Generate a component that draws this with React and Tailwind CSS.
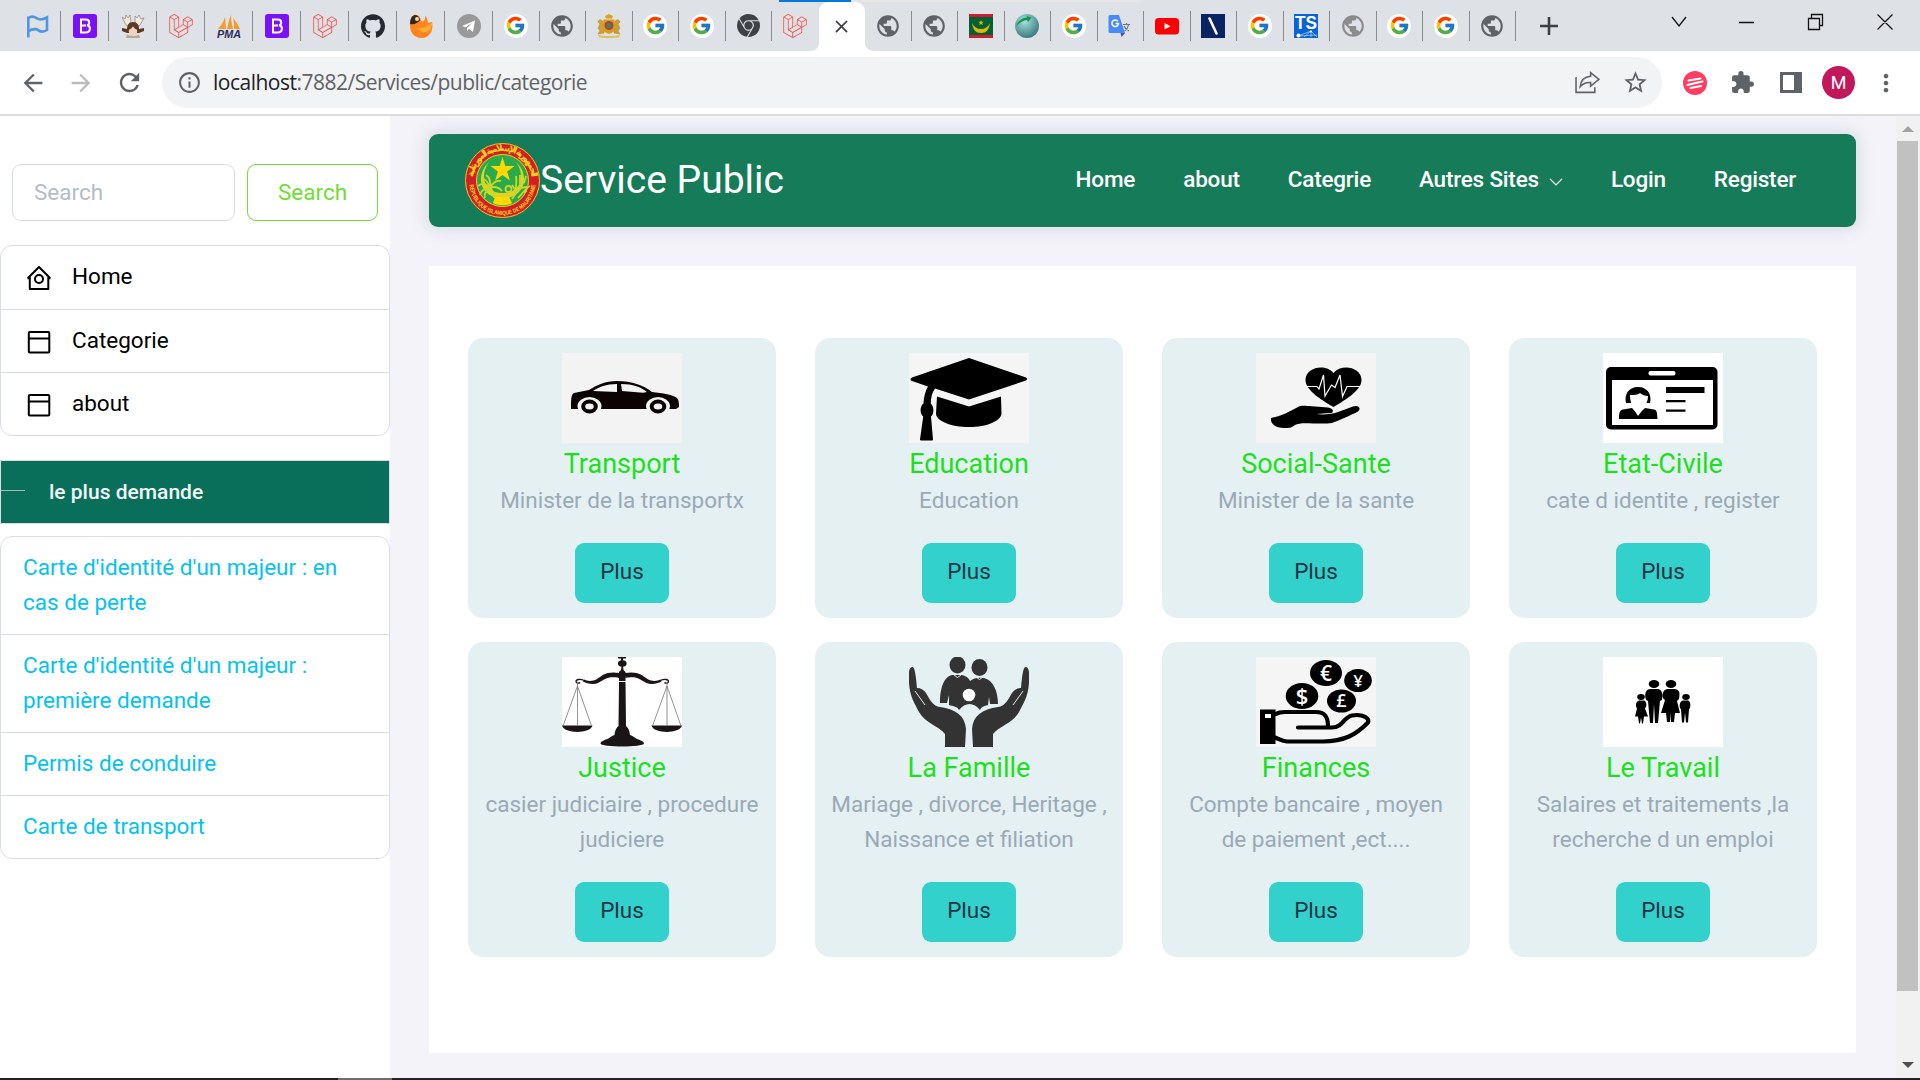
import React from "react";
import { SiLaravel, SiGithub, SiGooglechrome } from "react-icons/si";
import { FcGoogle } from "react-icons/fc";
import { MdPublic, MdExtension, MdArrowBack, MdArrowForward, MdRefresh, MdInfoOutline, MdStarBorder, MdMoreVert, MdAdd, MdClose } from "react-icons/md";

const Bootstrap = () => (
  <svg viewBox="0 0 24 24" className="size-6">
    <rect width="24" height="24" rx="3" fill="#7a12f8" />
    <path d="M8 5.500h4.600c2.200 0 3.600 1.100 3.600 3 0 1.400-.9 2.500-2.200 2.700 1.700.2 2.900 1.400 2.900 3.200 0 2.500-1.700 4-4.500 4H8z" fill="none" stroke="#fff" strokeWidth="2" />
    <path d="M8 11.500h5" stroke="#fff" strokeWidth="2" />
  </svg>
);
const Google = () => (
  <span className="flex size-6 items-center justify-center rounded-full bg-white">
    <FcGoogle size={21} />
  </span>
);
const Laravel = () => <SiLaravel size={24} color="#f9453b" />;
const Globe = () => <MdPublic size={26} color="#5f6368" />;
const PaleGlobe = () => <MdPublic size={26} color="#8b8b8b" />;
const Flag = () => (
  <svg viewBox="0 0 24 24" className="ml-[3px] size-6" fill="none" stroke="#5294e2" strokeWidth="2.600">
    <path d="M2.300 23.500V2.500M2.300 4c3-2 6-1.500 8.500.3s6 1.500 10.200-.8v12.500c-3 2-6 2-8.500.3s-6.500-1.300-10.200.7" />
  </svg>
);
const Figure = () => (
  <svg viewBox="0 0 24 24" className="size-6">
    <path d="M5 11 1 3l3 2 1-4 2 3 2-3 1 6-3 5zM19 11l4-7-3 1-2-4-2 3-2-2 0 6 4 4z" fill="#f3e9dc" stroke="#8e8175" strokeWidth=".7" />
    <path d="M6 15c0-4 2-7 6-7s6 3 6 7l5-1v3l-5 2H6l-5-2v-3z" fill="#5b3827" />
    <ellipse cx="12" cy="17" rx="4.200" ry="4.500" fill="#f2d2bd" />
    <path d="M7 16c3-1 4-2 5-4 1 2 2 3 5 4l-1-6H8z" fill="#5b3827" />
    <path d="M6 20.500c4 2 8 2 12 0l1 3.500H5z" fill="#b9a88c" />
  </svg>
);
const Pma = () => (
  <svg viewBox="0 0 26 24" className="h-6 w-[26px]">
    <path d="M2 15C5 12 8 7 9 3l1 12zM11 15c1-5 2-9 4-14 0 5 1 10 2 14zM18 15c0-4 0-8-1-11 3 3 5 7 7 11z" fill="#f59b2c" />
    <text x="13" y="23.500" textAnchor="middle" fontFamily="Liberation Sans" fontWeight="700" fontStyle="italic" fontSize="10.500" textLength="24" lengthAdjust="spacingAndGlyphs" fill="#2b2c63">PMA</text>
  </svg>
);
const Firebird = () => (
  <svg viewBox="0 0 24 24" className="size-6">
    <path d="M5 1c4-1 6 2 7 5 1 3 5 1 4-4 3 2 2 4 3 7l4-1c2 9-3 16-11 16C6 24 1 19 1 12 1 7 2 3 5 1z" fill="#ff8420" />
    <path d="M8 14c5 1 9-1 15-5 0 6-4 10-10 9z" fill="#ffb02e" />
    <path d="M1 10C1 5 2.500 2 5.500 1c3 0 5 2 5.500 5-2 3-6 5-10 4z" fill="#33271c" />
    <circle cx="8" cy="5" r="2" fill="#f6d9a4" />
  </svg>
);
const Telegram = () => (
  <svg viewBox="0 0 24 24" className="size-6">
    <circle cx="12" cy="12" r="12" fill="#999" />
    <path d="M5 12 18 6.500 16 18l-4-3-2 2v-3l5-5-6.500 4.300z" fill="#fff" />
  </svg>
);
const Crest = () => (
  <svg viewBox="0 0 24 24" className="size-6">
    <path d="M9 4.500 8 2l4-2 4 2-1 2.500z" fill="#d6a51f" />
    <path d="M7 9C5 5 2 5 1 8l2 2-2 4 2 3-2 3 6-1zM17 9c2-4 5-4 6-1l-2 2 2 4-2 3 2 3-6-1z" fill="#cba12f" stroke="#a98328" strokeWidth=".5" />
    <path d="M6.500 5.500h11V15c0 3-3 4-5.500 5-2.500-1-5.500-2-5.500-5z" fill="#d99b25" />
    <circle cx="12" cy="11.500" r="4.500" fill="#c33b2b" />
    <circle cx="12" cy="11.500" r="2.600" fill="#2f8a68" />
    <path d="M1 20.500c5 2 17 2 22 0l-1 3c-6 .7-14 .7-20 0z" fill="#dcc159" />
  </svg>
);
const Chrome = () => <SiGooglechrome size={23} color="#3f4347" />;
const Mauritania = () => (
  <svg viewBox="0 0 24 24" className="size-6">
    <path fill="#006233" d="M0 0h24v24H0z" />
    <path fill="#d01c2f" d="M0 0h24v3H0zM0 21h24v3H0z" />
    <path d="M3 9c1 7 4 10 9 10s8-3 9-10c-2 4-5 6-9 6S5 13 3 9z" fill="#e3b505" />
    <path d="m12 6 .7 1.800h2l-1.500 1.200.6 2L12 10l-1.800 1 .6-2-1.500-1.200h2z" fill="#e3b505" />
  </svg>
);
const Orb = () => (
  <svg viewBox="0 0 24 24" className="size-6">
    <defs>
      <radialGradient id="orb" cx=".4" cy=".3" r=".8">
        <stop offset="0" stopColor="#a6e0de" />
        <stop offset="1" stopColor="#2f6d72" />
      </radialGradient>
    </defs>
    <circle cx="12" cy="12" r="12" fill="url(#orb)" />
    <path d="M1 12.500C3 7 7 4 12 3.500L11.500 2l5 1.500L13 8l-.8-2C8 6 4.500 9 1 12.500z" fill="#12924f" />
  </svg>
);
const Translate = () => (
  <svg viewBox="0 0 24 24" className="size-6">
    <path d="M9 5h13a1.500 1.500 0 0 1 1.500 1.500V20a1.500 1.500 0 0 1-1.500 1.500H14z" fill="#dfe1e5" />
    <path d="M12.500 19H17l-3.500 4z" fill="#3a50ad" />
    <path d="M2 1h9l6 18H2a1.500 1.500 0 0 1-1.500-1.500v-15A1.500 1.500 0 0 1 2 1z" fill="#4a8af4" />
    <path d="M9.800 7.200A3.300 3.300 0 1 0 10.500 9.500H7.500" fill="none" stroke="#fff" strokeWidth="1.500" />
    <path d="M15 10.500h7M18.500 9v1.500M20.500 11c-.5 3-2.500 5-4 6M16 12c1 2.500 3 4 5 5" fill="none" stroke="#607985" strokeWidth="1.100" />
  </svg>
);
const YouTube = () => (
  <svg viewBox="0 0 24 24" className="size-6">
    <rect y="4" width="24" height="16.500" rx="3.500" fill="#f00" />
    <path d="m9.500 9 6 3.200-6 3.300z" fill="#fff" />
  </svg>
);
const Slash = () => (
  <svg viewBox="0 0 24 24" className="size-6">
    <path fill="#0a2463" d="M0 0h24v24H0z" />
    <path d="m8.500 4.500 7 15" stroke="#fff" strokeWidth="2.600" strokeLinecap="round" />
  </svg>
);
const Ts = () => (
  <svg viewBox="0 0 24 24" className="size-6">
    <path fill="#0a62d8" d="M0 0h24v24H0z" />
    <text x="12" y="14.500" textAnchor="middle" fontFamily="Liberation Sans" fontWeight="700" fontSize="18" textLength="22" lengthAdjust="spacingAndGlyphs" fill="#fff">TS</text>
    <path d="m4 22 13-5 6 6M4 22l19-1M10 23l7-6v6" stroke="#d8e8ff" strokeWidth=".6" fill="none" />
    <circle cx="4.500" cy="21.500" r="2" fill="#fff" /><circle cx="17" cy="17.500" r="1.100" fill="#fff" />
  </svg>
);
const Github = () => <SiGithub size={24} color="#24292f" />;

const wideTabs = [Flag, Bootstrap, Figure, Laravel, Pma, Bootstrap, Laravel, Github, Firebird, Telegram];
const midTabs = [Google, Globe, Crest, Google, Google, Chrome, Laravel];
const endTabs = [Globe, Globe, Mauritania, Orb, Google, Translate, YouTube, Slash, Google, Ts, PaleGlobe, Google, Google, Globe];

function Tab({ icon: Icon, wide, last }) {
  return (
    <div className={`flex h-[30px] shrink-0 items-center justify-center ${wide ? "w-12" : "w-[46.500px]"} ${last ? "" : "border-r-[1.500px] border-[#8a8d91]"}`}>
      <Icon />
    </div>
  );
}

function TabStrip() {
  return (
    <div className="relative flex h-[51px] items-center bg-[#dee1e6] pl-[13px]">
      <div className="absolute top-0 left-[779px] flex h-[2px] w-[362px] bg-[#e6e6e6]">
        <div className="w-[72px] bg-[#0078d7]" />
      </div>
      {wideTabs.map((t, i) => <Tab key={i} icon={t} wide />)}
      {midTabs.map((t, i) => <Tab key={i} icon={t} last={i === 6} />)}
      <div className="relative flex h-[49px] w-[46.500px] shrink-0 items-center justify-center self-end rounded-t-[9px] bg-white">
        <MdClose size={21} color="#3c4043" />
        <svg viewBox="0 0 9 9" className="absolute bottom-0 -left-[9px] size-[9px]"><path d="M9 0v9H0c6 0 9-4 9-9z" fill="#fff" /></svg>
        <svg viewBox="0 0 9 9" className="absolute -right-[9px] bottom-0 size-[9px]"><path d="M0 0v9h9C3 9 0 5 0 0z" fill="#fff" /></svg>
      </div>
      {endTabs.map((t, i) => <Tab key={i} icon={t} />)}
      <svg viewBox="0 0 18 18" className="ml-[24px] size-[18px] shrink-0" stroke="#3c4043" strokeWidth="2.600"><path d="M9 0v18M0 9h18" /></svg>
      <svg viewBox="0 0 242 24" className="mr-[24px] mb-2 ml-auto h-6 w-[242px] shrink-0" fill="none" stroke="#111" strokeWidth="1.300">
        <path d="m18 7 7 9 7-9M85 12.500h15" />
        <path d="M154.500 8.500h11v11h-11zM157.500 8.500v-4h11v11h-3M223.500 4.500l15 15M238.500 4.500l-15 15" />
      </svg>
    </div>
  );
}

function Toolbar() {
  return (
    <div className="flex h-[65px] items-center border-b-2 border-[#dcdce0] bg-white pl-[19px]">
      <MdArrowBack size={28} color="#5f6368" className="shrink-0" />
      <MdArrowForward size={28} color="#babcbe" className="ml-[20px] shrink-0" />
      <MdRefresh size={29} color="#5f6368" className="ml-[20px] shrink-0" />
      <div className="ml-[18px] flex h-[51px] w-[1500px] shrink-0 items-center rounded-full bg-[#f1f3f4] pl-[15px]">
        <MdInfoOutline size={25} color="#5f6368" />
        <span className="ml-[11px] font-['Open_Sans','Noto_Sans',sans-serif] text-[21px] tracking-[-0.5px] whitespace-nowrap text-[#5f6368]">
          <span className="text-[#202124]">localhost</span>:7882/Services/public/categorie
        </span>
        <svg viewBox="0 0 24 24" className="mr-[22px] ml-auto size-[25px]" fill="none" stroke="#5f6368" strokeWidth="1.500">
          <path d="M1 7v14.500h18v-5" />
          <path d="M15 2.500 23 9l-8 6.500V12c-4-.3-7 .5-10 4 .5-5.500 4-9.500 10-10z" />
        </svg>
        <MdStarBorder size={27} color="#5f6368" className="mr-[13px]" />
      </div>
      <svg viewBox="0 0 24 24" className="ml-[21px] size-6 shrink-0">
        <circle cx="12" cy="12" r="12" fill="#ff3d63" />
        <path d="m5.500 9.500 12-2M4.500 14l8-2 7-1.500M7.500 17l10.500-2" stroke="#fff" strokeWidth="2.100" strokeLinecap="round" fill="none" />
      </svg>
      <MdExtension size={25} color="#5f6368" className="ml-[23px] shrink-0" />
      <div className="ml-[25px] h-[21px] w-[22px] shrink-0 border-[3px] border-r-[8px] border-[#5f6368]" />
      <div className="ml-[20px] flex size-[33px] shrink-0 items-center justify-center rounded-full bg-[#c2185b] font-['Roboto',sans-serif] text-[18px] text-white">M</div>
      <MdMoreVert size={28} color="#5f6368" className="ml-[17px] shrink-0" />
    </div>
  );
}

const BoxIcon = () => (
  <svg viewBox="0 0 24 24" className="mt-px size-6 shrink-0" fill="none" stroke="#000" strokeWidth="2">
    <rect x="1.800" y="2" width="20.500" height="20.500" rx="1" />
    <path d="M2 8.500h20" />
  </svg>
);
const HouseIcon = () => (
  <svg viewBox="0 0 24 24" className="size-6 shrink-0" fill="none" stroke="#000" strokeWidth="2">
    <path d="m.5 12.500 2.300-1V23h18.500V11.500l2.200 1M1 12 12 1l11 11" strokeLinejoin="round" />
    <circle cx="12" cy="13" r="4" />
  </svg>
);
const menu = [["Home", HouseIcon, "h-16"], ["Categorie", BoxIcon, "h-[63px]"], ["about", BoxIcon, "h-[62px]"]];
const requests = ["Carte d'identité d'un majeur : en cas de perte", "Carte d'identité d'un majeur : première demande", "Permis de conduire", "Carte de transport"];

function Sidebar() {
  return (
    <aside className="w-[390px] shrink-0 bg-white text-[22.500px] leading-[35px]">
      <div className="mt-12 flex h-[57px] gap-3 px-3">
        <div className="flex w-[223px] items-center rounded-[9px] border border-[#d9dee3] pl-[21px] text-[#b4bdc6]">Search</div>
        <div className="flex w-[131px] items-center justify-center rounded-[9px] border border-[#71dd37] text-[#71dd37]">Search</div>
      </div>
      <ul className="mt-6 divide-y divide-[#d9dee3] rounded-[12px] border border-[#d9dee3] text-black">
        {menu.map(([label, Icon, height]) => (
          <li key={label} className={`flex items-center gap-[21px] pl-[26px] ${height}`}>
            <Icon />
            <span className="pb-[2px]">{label}</span>
          </li>
        ))}
      </ul>
      <div className="mt-6 flex h-16 items-center border border-[#d9dee3] bg-[#096e5a] text-[21px] font-medium text-[#f3f8f8]">
        <span className="-mt-[3px] h-px w-6 bg-[#a9b8bd]" />
        <span className="ml-6">le plus demande</span>
      </div>
      <ul className="mt-3 divide-y divide-[#d9dee3] rounded-[12px] border border-[#d9dee3] text-[#03c3ec]">
        {requests.map((r) => <li key={r} className="px-[22px] pt-[13px] pb-[14px]">{r}</li>)}
      </ul>
    </aside>
  );
}

function Emblem() {
  return (
    <svg viewBox="0 0 75 75" className="size-[75px]">
      <defs>
        <path id="arcTop" d="M8 37.500a29.500 29.500 0 0 1 59 0" />
        <path id="arcBottom" d="M4.500 39a33 33 0 0 0 66 0" />
      </defs>
      <circle cx="37.500" cy="37.500" r="37" fill="#d21f26" stroke="#f2c61c" />
      <circle cx="37.500" cy="37.500" r="26" fill="#2aaa4b" stroke="#f2d21c" />
      <path d="M24 19C10 32 14 54 37.500 56 61 54 65 32 51 19c10 14 5 31-13.500 31S14 33 24 19z" fill="#e2d323" />
      <path d="m37.500 14 2.800 9h9.200l-7.400 5.600 2.800 9-7.400-5.600-7.400 5.600 2.800-9-7.400-5.600h9.200z" fill="#ffd900" />
      <g fill="none" stroke="#c9d72c" strokeWidth="1.800">
        <path d="M25 45c-5-5-8-5-12-2M25 45c-2-7-5-9-9-10M25 45c1-7-1-11-4-13M25 45c3-6 7-8 11-7M25 45c4-2 9-1 12 3M25 45c-6 0-9 3-10 7M25 45c3 3 5 7 4 10M25 45c-4 3-6 7-5 10" />
        <path d="M47 56 60 37M50 52c1-8 2-13 1-19M53 55c5-5 9-11 12-12M51 48l-4-6M55 45l7-1M55 41V32M57 50l5-2M59 40l2-7" />
        <circle cx="43.500" cy="46" r="3" />
      </g>
      <path d="M28 60l2-6h14l3 6c-4 3-14 3-19 0z" fill="#ffd900" />
      <text fontFamily="DejaVu Sans" fontSize="9" fontWeight="700" fill="#f8d51b">
        <textPath href="#arcTop" startOffset="50%" textAnchor="middle" textLength="86">الجمهورية الإسلامية الموريتانية</textPath>
      </text>
      <text fontFamily="Liberation Sans" fontSize="5.800" fontWeight="700" fill="#f8d51b">
        <textPath href="#arcBottom" startOffset="50%" textAnchor="middle" textLength="98" lengthAdjust="spacingAndGlyphs">RÉPUBLIQUE ISLAMIQUE DE MAURITANIE</textPath>
      </text>
    </svg>
  );
}

function Navbar() {
  return (
    <nav className="flex h-[93px] items-center rounded-[9px] bg-[#167b58] pr-[60px] pl-9 text-white shadow-[0_0_15px_4px_rgba(67,89,113,0.13)]">
      <Emblem />
      <span className="-mt-px text-[39px] leading-none whitespace-nowrap">Service Public</span>
      <div className="-mt-px ml-auto flex items-center gap-12 text-[22.500px] font-medium tracking-[-0.2px] whitespace-nowrap">
        <span>Home</span>
        <span>about</span>
        <span>Categrie</span>
        <span className="flex items-center gap-[10px]">
          Autres Sites
          <svg viewBox="0 0 14 8" className="mt-[3px] h-2 w-[14px]" fill="none" stroke="#fff" strokeWidth="1.200"><path d="m1 .8 6 6 6-6" /></svg>
        </span>
        <span>Login</span>
        <span>Register</span>
      </div>
    </nav>
  );
}

const Car = () => (
  <>
    <path d="M0 0h120v90H0z" fill="#f3f3f3" />
    <path d="M9 54C9 48 9 41 12 40l15-3c8-5 16-9 28-9 15 0 26 4 35 11 10 1 22 3 25 6 2 2 2 6 2 9l-3 2H9z" fill="#0b0204" />
    <path d="M31 38c6-4 13-7 24-7v8zM59 31c12 0 20 3 26 8l-4 .8L60 38z" fill="#f3f3f3" />
    <ellipse cx="27.500" cy="53" rx="12" ry="9" fill="#f3f3f3" />
    <ellipse cx="96" cy="53" rx="12" ry="9" fill="#f3f3f3" />
    <ellipse cx="27.500" cy="53.500" rx="6.300" ry="5" fill="none" stroke="#0b0204" strokeWidth="4" />
    <ellipse cx="96" cy="53.500" rx="6.300" ry="5" fill="none" stroke="#0b0204" strokeWidth="4" />
  </>
);
const Cap = () => (
  <>
    <path d="M0 0h120v90H0z" fill="#f5f5f5" />
    <path d="M60 5 117 24.500q2 1.500 0 3L60 46.500 26 35.500c-3 4-4 9-4.300 15 3 2 4 10 .3 13l2 23q0 1-1 1H12q-1-.2-1-1l3.200-23c-4-3-3-11 .3-13 .3-7 2-13 4.500-17L3 28q-3-2 0-3.500z" />
    <path d="M28 43.500 60 53.500 92 43.500l.5 17C92 68 78 74 60 74S27 68 27 60.500z" />
  </>
);
const Health = () => (
  <>
    <path d="M0 0h120v90H0z" fill="#f4f4f4" />
    <path d="M77.500 54C64 46 49.500 37 49.500 27c0-13 20-17 28-7 8-10 28-6 28 7 0 10-14.500 19-28 27z" />
    <path d="M50 33.500h11l2 2.500 4.500-14L69 43l6.500-11 3.500 2.500L84 22l2.500 21.500L91 33.500h15" fill="none" stroke="#fff" strokeWidth="1.200" />
    <path d="M15 65c10-2 18-6 27-11 4-2 8-.8 14-.7l16 1.200c6 1 6 5 3 5.500L60 61c8 1 17 0 22-2l15-5.500c5-2 9 1.500 5 5C95 62 84 67 76 70c-14 2-31-2-37 2-4 3-5 3-11 3-8 0-14-4-13-10z" />
  </>
);
const IdCard = () => (
  <>
    <path d="M0 0h120v90H0z" fill="#fff" />
    <rect x="3" y="14" width="111.500" height="62.500" rx="5" />
    <path d="M9 27h101v45H9z" fill="#fff" />
    <rect x="45.500" y="18" width="27" height="4.500" rx="2" fill="#fff" />
    <path d="M63 34h38.500v6H63zM63 47h19.500v2.200H63zM63 56.500h19.500v2.200H63z" />
    <path d="M23 50c-2-8 2-16 12-16s14 8 12 16z" />
    <path d="M27 42c4 0 8 0 10-2 2 2 5 3 8 3 0 6-3 12-9.500 12S27 49 27 42z" fill="#fff" />
    <path d="M16 66c0-7 1-9 4-9.500L29 55l6 6.500 7-6.500 9 1.500c3 .5 3 3 3.500 9.500z" />
    <path d="m30 55 5 8 6-8z" fill="#fff" />
  </>
);
const Scales = () => (
  <>
    <path d="M0 0h120v90H0z" fill="#fff" />
    <g fill="#1a1416">
      <path d="M56 0h8v1.500h-3v3h-2v-3h-3z" />
      <ellipse cx="60.300" cy="6.500" rx="4.300" ry="3.300" />
      <path d="M59.500 9h1.500l.5 4 2 2v9h-6.500v-9l2-2zM57 25h6.500l.5 44c3 3 3.500 5 4 9 3 1 4 2 7 4 5 1.500 7 3 7 4.500 0 4-43.500 4-43.500 0 0-1.500 2-3 7-4.500 3-2 4-3 7-4 .5-4 1-6 4-9z" />
      <path d="M0 68.500h30.500c-2 8.500-28.500 8.500-30.500 0zM89.500 68.500H120c-2 8.500-28.500 8.500-30.500 0z" />
      <path d="M58 16c-14-2-17 2-23 6-5 3-10 2-13 .5l-1 2c4 2 10 3.500 15 1.500 8-4 9-7 21-5zM62.500 16c14-2 17 2 23 6 5 3 10 2 13 .5l1 2c-4 2-10 3.500-15 1.500-8-4-9-7-21-5z" />
    </g>
    <path d="M22 23.500c-4-2-8-1-8 1s3 2 4 1M98.500 23.500c4-2 8-1 8 1s-3 2-4 1" fill="none" stroke="#1a1416" strokeWidth="1.300" />
    <path d="M15.500 26v43M15.500 29 1 69M15.500 29l14 40M105 26v43M105 29 90.500 69M105 29l14 40" stroke="#777" strokeWidth=".8" />
  </>
);
const Hand = () => <path d="M0 18c-.3-5 1-8 3.500-8S7 20 8 31c4 0 7 2 9 5 4 7 7 13 14 14 16 2 25 9 26 22l-1 18H36V77C30 69 16 66 10 55 5 45-1 37 0 18z" />;
const Family = () => (
  <g fill="#333">
    <Hand />
    <g transform="matrix(-1 0 0 1 120 0)"><Hand /></g>
    <path d="m6 34 10 14M114 34l-10 14" stroke="#e4f0f2" strokeWidth="1" />
    <ellipse cx="48.500" cy="8" rx="8" ry="8.500" />
    <ellipse cx="70.500" cy="10.500" rx="8" ry="8.500" />
    <path d="M31 46c0-13 3-26 12-28h10c4 1 7 3 8 6 3-3 9-4 14-3 9 2 14 13 14 26h-8l-1-7-1 8c-4 1-7 2-8 5-6-8-15-8-21 0-1-3-6-4-10-5v-10l-2 8z" />
    <path d="m45 18 3.500 2.500L52 18M67 20l3.500 2.500L74 20" fill="none" stroke="#e4f0f2" />
    <circle cx="60" cy="38" r="6.300" fill="#fff" />
  </g>
);
const coins = [[70, 16, 16, 13, "€", 21], [102, 23.5, 13.8, 11.5, "¥", 17], [46, 39, 16.3, 13, "$", 22], [85.5, 44, 14.5, 11.5, "£", 18]];
const Finance = () => (
  <>
    <path d="M0 0h120v90H0z" fill="#f5f5f5" />
    {coins.map(([x, y, rx, ry, sign, size]) => (
      <g key={sign}>
        <ellipse cx={x} cy={y} rx={rx} ry={ry} />
        <text x={x} y={y + size * 0.36} textAnchor="middle" fontFamily="Open Sans" fontWeight="600" fontSize={size} fill="#fff">{sign}</text>
      </g>
    ))}
    <path d="M4 52.500h15.500V87H4z" />
    <path d="M9 57h6v4H9z" fill="#fff" />
    <path d="M20 57c3-2 6-2 9-2h31c9 0 12 5 12 14M42 70.500h34c11 0 11-10 20-12 10-2 20 3 15 8-10 10-22 18-44 18H31c-5 0-7-2-12-4" fill="none" stroke="#000" strokeWidth="4.200" strokeLinecap="round" />
  </>
);
const Work = () => (
  <>
    <path d="M0 0h120v90H0z" fill="#fff" />
    <ellipse cx="51" cy="27" rx="5.300" ry="4" /><ellipse cx="68" cy="27" rx="5.300" ry="4" />
    <ellipse cx="38" cy="40" rx="3.800" ry="3" /><ellipse cx="83" cy="40" rx="3.800" ry="3" />
    <path d="M47 32h8c4 1 5 4 4 11l-2 1-2 22h-3l-1-19-1 19h-3l-2-22c-4-1-4-12 2-12zM64 32h8c5 1 5 4 4 10l-2 2 3 12h-5l-1 9h-3V56l-1 9h-3l-1-9h-5l4-13c-4-2-3-10 2-11zM36 43.500h5c3 1 3 6 1 8l3 8h-4l-1 7h-1l-1-6-1 6h-1l-1-7h-3l2-8c-2-3-1-7 2-8zM80 43.500h5c3 1 3 7 1 9l-1 13h-2l-1-10-1 10h-2l-1-13c-2-2-2-8 2-9z" />
  </>
);

const categories = [
  ["Transport", "Minister de la transportx", Car],
  ["Education", "Education", Cap],
  ["Social-Sante", "Minister de la sante", Health],
  ["Etat-Civile", "cate d identite , register", IdCard],
  ["Justice", "casier judiciaire , procedure judiciere", Scales],
  ["La Famille", "Mariage , divorce, Heritage , Naissance et filiation", Family],
  ["Finances", "Compte bancaire , moyen de paiement ,ect....", Finance],
  ["Le Travail", "Salaires et traitements ,la recherche d un emploi", Work],
];

function Card({ title, text, art: Art }) {
  return (
    <article className="flex flex-col items-center rounded-[15px] bg-[#e4f0f2] px-[15px] py-[15px] text-center">
      <svg viewBox="0 0 120 90" className="h-[90px] w-[120px] shrink-0"><Art /></svg>
      <h2 className="mt-[5px] text-[27px] leading-[32px] text-[#1de01d]">{title}</h2>
      <p className="mt-[3px] text-[22.500px] leading-[35px] text-[#9aa9b6]">{text}</p>
      <button className="mt-auto h-[60px] w-[94px] rounded-[9px] bg-[#32d1cc] pb-[2px] text-[22.500px] text-[#233446]">Plus</button>
    </article>
  );
}

function Scrollbar() {
  return (
    <div className="flex w-6 shrink-0 flex-col items-center bg-[#f1f1f1] pr-px">
      <svg viewBox="0 0 12 6" className="mt-[10px] h-[6px] w-3"><path d="M6 0l6 6H0z" fill="#a3a3a3" /></svg>
      <div className="mt-[9px] h-[850px] w-[21px] bg-[#c1c1c1]" />
      <svg viewBox="0 0 12 6" className="mt-auto mb-[10px] h-[6px] w-3"><path d="M0 0h12L6 6z" fill="#505050" /></svg>
    </div>
  );
}

export default function App() {
  return (
    <div className="flex h-[1080px] w-[1920px] flex-col overflow-hidden font-['Roboto',sans-serif]">
      <TabStrip />
      <Toolbar />
      <div className="flex min-h-0 flex-1">
        <Sidebar />
        <main className="flex flex-1 flex-col bg-[#f4f3f9] pt-[18px] pr-10 pl-[39px]">
          <Navbar />
          <section className="mt-[39px] h-[787px] bg-white px-[39px] pt-[72px]">
            <div className="grid grid-cols-4 grid-rows-[280px_315px] gap-x-[39px] gap-y-6">
              {categories.map(([title, text, art]) => <Card key={title} title={title} text={text} art={art} />)}
            </div>
          </section>
        </main>
        <Scrollbar />
      </div>
      <div className="flex h-[2px] shrink-0 bg-[#202226]">
        <div className="ml-[338px] w-[54px] bg-[#6b6d70]" />
      </div>
    </div>
  );
}
